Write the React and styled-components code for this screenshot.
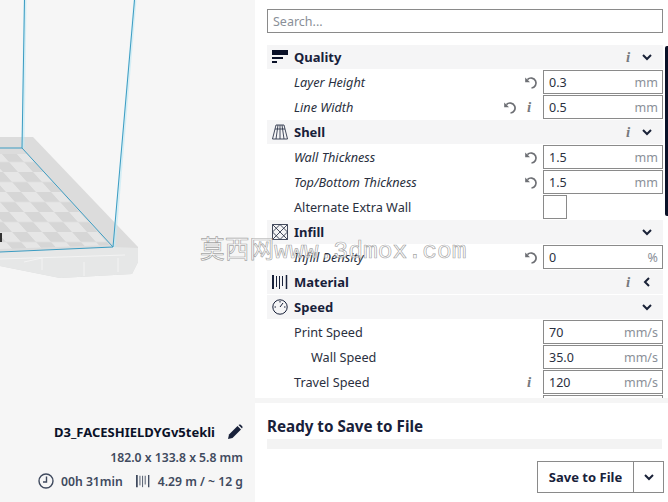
import React from "react";
import styled, { createGlobalStyle } from "styled-components";

const GlobalStyle = createGlobalStyle`
  html, body {
    margin: 0;
    padding: 0;
    background: #fff;
  }
  body {
    font-family: "Noto Sans", "Open Sans", sans-serif;
    color: #0a1128;
  }
`;

const Page = styled.div`
  position: relative;
  display: grid;
  grid-template-columns: 255px 1fr;
  grid-template-rows: 502px;
  width: 668px;
  height: 502px;
  overflow: hidden;
`;

const Viewport = styled.div`
  display: flex;
  flex-direction: column;
  min-height: 0;
  background: #f6f6f6;
`;

const Scene = styled.svg`
  display: block;
  flex: 1;
  width: 255px;
  min-height: 0;
`;

const JobInfo = styled.div`
  display: flex;
  flex-direction: column;
  align-items: flex-end;
  padding: 0 12px 9px 0;
  color: #3f4a5e;
  font-size: 12.2px;
  font-weight: 600;
`;

const JobName = styled.div`
  display: flex;
  align-items: center;
  gap: 12px;
  height: 24px;
  margin-bottom: 1px;
  color: #0a1128;
  font-size: 13px;
  font-weight: 700;
`;

const JobLine = styled.div`
  display: flex;
  align-items: center;
  height: 24px;
`;

const TimeText = styled.span`
  margin: 0 13px 0 7px;
`;

const LengthText = styled.span`
  margin-left: 8px;
`;

const Panel = styled.div`
  display: flex;
  flex-direction: column;
  min-width: 0;
  background: #fff;
`;

const SettingsArea = styled.div`
  position: relative;
  box-sizing: border-box;
  height: 398px;
  overflow: hidden;
  padding: 9px 5px 0 12px;
`;

const Search = styled.div`
  box-sizing: border-box;
  height: 24px;
  line-height: 24px;
  padding-left: 5px;
  border: 1px solid #8a8a8a;
  font-size: 12.5px;
  color: #8a8f98;
  margin-bottom: 12px;
`;

const Scrollbar = styled.div`
  position: absolute;
  top: 46px;
  right: 0;
  width: 3px;
  height: 170px;
  border-radius: 2px 0 0 2px;
  background: #0a1128;
`;

const SectionRow = styled.div`
  display: flex;
  align-items: center;
  height: 24px;
  margin-bottom: 1px;
  padding-left: 5px;
  background: #f5f5f6;
`;

const SectionTitle = styled.span`
  flex: 1;
  margin-left: 6px;
  font-size: 13px;
  font-weight: 700;
  color: #18213a;
`;

const SettingRow = styled.div`
  display: flex;
  align-items: center;
  height: 25px;
  padding-left: ${({ $indent }) => 27 + ($indent || 0)}px;
`;

const SettingLabel = styled.span`
  flex: 1;
  margin-bottom: 2px;
  font-size: 12.7px;
  font-style: ${({ $italic }) => ($italic ? "italic" : "normal")};
  color: #2a3040;
  white-space: nowrap;
`;

const ValueBox = styled.div`
  box-sizing: border-box;
  display: flex;
  align-items: center;
  justify-content: space-between;
  width: 120px;
  height: 24px;
  margin-top: -1px;
  padding: 0 4px 0 5px;
  border: 1px solid #8a8a8a;
  font-size: 12.5px;
  color: #2a3040;
`;

const Unit = styled.span`
  color: #8a8f98;
`;

const CheckBox = styled.div`
  box-sizing: border-box;
  width: 24px;
  height: 24px;
  margin-right: 96px;
  margin-top: -1px;
  border: 1px solid #8a8a8a;
`;

const InfoMark = styled.span`
  display: inline-block;
  width: 8px;
  margin-right: ${({ $gap }) => $gap}px;
  text-align: center;
  font-family: "Liberation Serif", serif;
  font-style: italic;
  font-weight: 700;
  font-size: 15px;
  line-height: 1;
  color: #77797e;
`;

const ResetButton = styled.svg`
  display: block;
  width: 14px;
  height: 14px;
  margin-right: ${({ $gap }) => $gap}px;
  color: #6d6f74;
`;

const Chevron = styled.svg`
  display: block;
  width: 10px;
  height: 10px;
  margin-right: ${({ $gap }) => $gap ?? 11}px;
  color: #1a2238;
`;

const Strip = styled.div`
  height: 5px;
  background: #f5f5f5;
`;

const Footer = styled.div`
  flex: 1;
  display: flex;
  flex-direction: column;
  padding: 14px 6px 0 12px;
`;

const ReadyTitle = styled.div`
  height: 22px;
  line-height: 18px;
  font-size: 15.2px;
  font-weight: 700;
  color: #18213a;
`;

const Progress = styled.div`
  height: 10px;
  background: #f3f3f3;
`;

const SaveGroup = styled.div`
  box-sizing: border-box;
  display: flex;
  align-self: flex-end;
  width: 127px;
  height: 32px;
  margin: 12px -2px 0 0;
  border: 1px solid #8a8a8a;
`;

const SaveLabel = styled.div`
  width: 95px;
  border-right: 1px solid #8a8a8a;
  text-align: center;
  line-height: 30px;
  font-size: 13px;
  font-weight: 700;
  color: #18213a;
`;

const SaveCaret = styled.div`
  flex: 1;
  display: flex;
  align-items: center;
  justify-content: center;
`;

const Watermark = styled.div`
  position: absolute;
  left: 200px;
  top: 235px;
  font-family: "Liberation Mono", "Noto Sans CJK SC", monospace;
  font-size: 24.7px;
  line-height: 32px;
  white-space: nowrap;
  color: rgba(255, 255, 255, 0.6);
  -webkit-text-stroke: 0.7px rgba(125, 125, 125, 0.7);
`;

const QualityIcon = () => (
  <svg width="16" height="16" viewBox="0 0 16 16">
    <rect x="0" y="1" width="16" height="5" fill="#0a1128" />
    <rect x="0" y="8" width="11" height="2" fill="#0a1128" />
    <rect x="0" y="12" width="5" height="2" fill="#0a1128" />
  </svg>
);

const ShellIcon = () => (
  <svg width="16" height="16" viewBox="0 0 16 16" fill="none" stroke="#30384c" strokeWidth="0.9">
    <path d="M4 1h8M4 1 .5 15M12 1l3.500 14M.5 15h15M6 1 4 15M10 1l2 14M8 1v14M3 5h10" />
  </svg>
);

const InfillIcon = () => (
  <svg width="16" height="16" viewBox="0 0 16 16" fill="none" stroke="#30384c" strokeWidth="0.9">
    <path d="M.5.5h15v15H.5zM.5 8 8 .5 15.5 8 8 15.500zM.5.5l15 15M15.5.5l-15 15" />
  </svg>
);

const MaterialIcon = ({ size = 16, color = "#18213a" }) => (
  <svg width={size} height={size} viewBox="0 0 16 16" stroke={color}>
    <path strokeWidth="2" d="M1 1v14" />
    <path strokeWidth="1" d="M4.500 2v11M7.500 2v13M10.500 2v10" />
    <path strokeWidth="1.5" d="M14.500 1v14" />
  </svg>
);

const SpeedIcon = () => (
  <svg width="16" height="16" viewBox="0 0 16 16" fill="none" stroke="#18213a" strokeWidth="1">
    <circle cx="8" cy="8" r="7.200" />
    <path d="M8 8l3-4M2.500 8h1.500M8 2v1.500M12 8h1.500" />
  </svg>
);

const ClockIcon = () => (
  <svg width="16" height="16" viewBox="0 0 16 16" fill="none" stroke="#3f4a5e" strokeWidth="1.4">
    <circle cx="8" cy="8" r="7" />
    <path d="M8.500 3.500V9H5" />
  </svg>
);

const PencilIcon = () => (
  <svg width="16" height="16" viewBox="0 0 16 16" fill="#18213a">
    <path d="M1 15l1-4.500L10.500 2l3.500 3.500L5.500 14z" />
    <path d="M11.500 1l1-.5a1.500 1.500 0 0 1 1.300.3l1.400 1.400a1.500 1.500 0 0 1 .3 1.300l-.5 1z" />
  </svg>
);

const ResetIcon = ({ gap }) => (
  <ResetButton $gap={gap} viewBox="0 0 14 14" fill="none" stroke="currentColor" strokeWidth="1.7">
    <path d="M3.400 3.600A5 5 0 1 1 7.500 12" />
    <path d="M1.200 1.400v4.800h4.800" fill="currentColor" stroke="none" />
  </ResetButton>
);

const ChevronIcon = ({ dir = "down", gap }) => (
  <Chevron $gap={gap} viewBox="0 0 10 10" fill="none" stroke="currentColor" strokeWidth="2">
    <path d={dir === "down" ? "M1 3l4 4 4-4" : "M7 1L3 5l4 4"} />
  </Chevron>
);

const Section = ({ icon, title, info, dir }) => (
  <SectionRow>
    {icon}
    <SectionTitle>{title}</SectionTitle>
    {info && <InfoMark $gap={10}>i</InfoMark>}
    <ChevronIcon dir={dir} />
  </SectionRow>
);

const Setting = ({ label, italic, indent, value, unit, reset, info, checkbox }) => (
  <SettingRow $indent={indent}>
    <SettingLabel $italic={italic}>{label}</SettingLabel>
    {reset && <ResetIcon gap={info ? 8 : 5} />}
    {info && <InfoMark $gap={10}>i</InfoMark>}
    {checkbox ? (
      <CheckBox />
    ) : (
      <ValueBox>
        <span>{value}</span>
        <Unit>{unit}</Unit>
      </ValueBox>
    )}
  </SettingRow>
);

// the build plate seen in perspective, with the blue print volume outline
const BuildPlate = () => (
  <Scene viewBox="0 0 255 420" preserveAspectRatio="xMinYMin meet">
    <defs>
      <pattern
        id="checker"
        width="30"
        height="20"
        patternUnits="userSpaceOnUse"
        patternTransform="translate(0 152) skewX(42)"
      >
        <rect width="30" height="20" fill="#e6e6e6" />
        <rect width="15" height="10" fill="#d6d6d6" />
        <rect x="15" y="10" width="15" height="10" fill="#d6d6d6" />
      </pattern>
    </defs>
    <path d="M0 137H33L138 247V262L132 274 60 278 0 266z" fill="#dcdcdc" />
    <path d="M0 252L113 247 138 248V262L132 274 60 278 0 266z" fill="#e6e7e7" />
    <path d="M0 154H27L109 245 0 249z" fill="url(#checker)" />
    <path d="M24 262L42 258V270M84 262V276M118 258V272M0 259L125 255" stroke="#f3f3f3" fill="none" />
    <rect x="0" y="233" width="2" height="9" fill="#333" />
    <g fill="none" stroke="#bfe9f5" strokeWidth="3" opacity="0.6">
      <path d="M135 0L114 247M25 0L23 148" />
    </g>
    <g fill="none" stroke="#3c9cc2" strokeWidth="1">
      <path d="M134.500 0L113 247M24.500 0L22 148H0M22 148L113 247 0 252" />
    </g>
  </Scene>
);

export default function App() {
  return (
    <Page>
      <GlobalStyle />
      <Viewport>
        <BuildPlate />
        <JobInfo>
          <JobName>
            D3_FACESHIELDYGv5tekli
            <PencilIcon />
          </JobName>
          <JobLine>182.0 x 133.8 x 5.8 mm</JobLine>
          <JobLine>
            <ClockIcon />
            <TimeText>00h 31min</TimeText>
            <MaterialIcon size={14} color="#3f4a5e" />
            <LengthText>4.29 m / ~ 12 g</LengthText>
          </JobLine>
        </JobInfo>
      </Viewport>
      <Panel>
        <SettingsArea>
          <Search>Search...</Search>
          <Section icon={<QualityIcon />} title="Quality" info />
          <Setting label="Layer Height" italic reset value="0.3" unit="mm" />
          <Setting label="Line Width" italic reset info value="0.5" unit="mm" />
          <Section icon={<ShellIcon />} title="Shell" info />
          <Setting label="Wall Thickness" italic reset value="1.5" unit="mm" />
          <Setting label="Top/Bottom Thickness" italic reset value="1.5" unit="mm" />
          <Setting label="Alternate Extra Wall" checkbox />
          <Section icon={<InfillIcon />} title="Infill" />
          <Setting label="Infill Density" italic reset value="0" unit="%" />
          <Section icon={<MaterialIcon />} title="Material" info dir="left" />
          <Section icon={<SpeedIcon />} title="Speed" />
          <Setting label="Print Speed" value="70" unit="mm/s" />
          <Setting label="Wall Speed" indent={17} value="35.0" unit="mm/s" />
          <Setting label="Travel Speed" info value="120" unit="mm/s" />
          <Setting label="" value="" unit="" />
          <Scrollbar />
        </SettingsArea>
        <Strip />
        <Footer>
          <ReadyTitle>Ready to Save to File</ReadyTitle>
          <Progress />
          <SaveGroup>
            <SaveLabel>Save to File</SaveLabel>
            <SaveCaret>
              <ChevronIcon gap={0} />
            </SaveCaret>
          </SaveGroup>
        </Footer>
      </Panel>
      <Watermark>莫西网www.3dmox.com</Watermark>
    </Page>
  );
}
